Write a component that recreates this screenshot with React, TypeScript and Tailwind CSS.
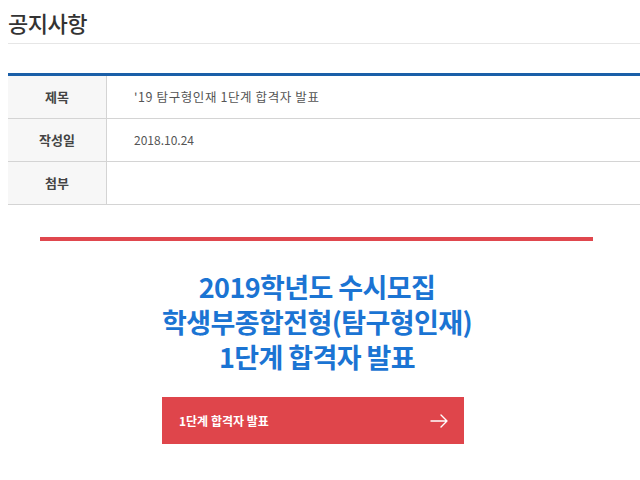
const font = { fontFamily: '"Noto Sans CJK KR", "Noto Sans", sans-serif' };

const rows = [
  { label: "제목", value: "'19 탐구형인재 1단계 합격자 발표", wide: true },
  { label: "작성일", value: "2018.10.24", wide: false },
  { label: "첨부", value: "", wide: false },
];

export default function App() {
  return (
    <div className="w-[640px] h-[480px] overflow-hidden bg-white" style={font}>
      <div className="pl-2">
        <h2 className="pt-[6px] h-[43px] text-[22px] leading-[32px] font-medium text-[#333] tracking-[-0.5px]">
          공지사항
        </h2>
        <div className="h-px bg-[#e6e6e6]" />

        <div className="mt-[29px] border-t-[3px] border-[#1a5fa8]">
          {rows.map((r) => (
            <div key={r.label} className="flex h-[43px] border-b border-[#d4d4d4]">
              <div className="w-[99px] shrink-0 bg-[#f7f7f7] border-r border-[#d4d4d4] flex items-center justify-center text-[13px] font-bold text-[#444]">
                {r.label}
              </div>
              <div
                className={
                  "flex items-center pl-[27px] text-[#555] " +
                  (r.wide ? "text-[12.5px] tracking-[0.6px]" : "text-[12px]")
                }
              >
                {r.value}
              </div>
            </div>
          ))}
        </div>
      </div>

      <div className="mt-[32px] mx-[40px] w-[553px] h-[4px] bg-[#e0474e]" />

      <div className="mt-[28px] flex flex-col items-center text-[#1b74d3] font-bold text-[27px] leading-[35px] tracking-[-0.6px] pr-[6px]">
        <div>2019학년도 수시모집</div>
        <div>학생부종합전형(탐구형인재)</div>
        <div>1단계 합격자 발표</div>
      </div>

      <div className="mt-[23px] ml-[162px] w-[302px] h-[47px] bg-[#df454b] flex items-center justify-between pl-[17px] pr-[16px]">
        <span className="text-white text-[12px] font-bold">1단계 합격자 발표</span>
        <svg width="18" height="14" viewBox="0 0 18 14" fill="none" stroke="white" strokeWidth="1.4" strokeLinecap="round" strokeLinejoin="round">
          <path d="M1 7h16M11 1l6 6-6 6" />
        </svg>
      </div>
    </div>
  );
}
